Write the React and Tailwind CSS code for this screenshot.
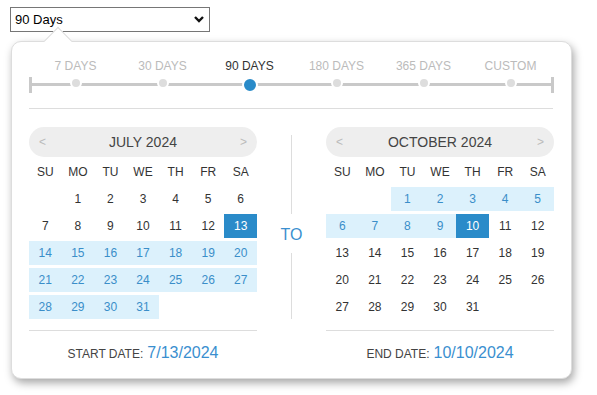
import React from "react";

const FONT = { fontFamily: "'Liberation Sans', Arial, Helvetica, sans-serif" };

const OPTIONS = ["7 DAYS", "30 DAYS", "90 DAYS", "180 DAYS", "365 DAYS", "CUSTOM"];
const DAYNAMES = ["SU", "MO", "TU", "WE", "TH", "FR", "SA"];

function Calendar({ title, startDay, days, selected, rangeFrom, rangeTo, label, value }) {
  const cells = [];
  for (let i = 0; i < startDay; i++) cells.push(null);
  for (let d = 1; d <= days; d++) cells.push(d);
  return (
    <div className="w-[228px] flex flex-col">
      <div className="h-[30px] rounded-full bg-[#eeeeee] flex items-center justify-between px-[10px]">
        <span className="text-[12px] text-[#bbbbbb]">&lt;</span>
        <span className="text-[14px] text-[#444444]">{title}</span>
        <span className="text-[12px] text-[#bbbbbb]">&gt;</span>
      </div>
      <div className="grid grid-cols-7 h-[24px] mt-[3px]">
        {DAYNAMES.map((n) => (
          <div key={n} className="flex items-center justify-center text-[12px] text-[#333333]">
            {n}
          </div>
        ))}
      </div>
      <div className="grid grid-cols-7 gap-y-[3px] mt-[3px]">
        {cells.map((d, i) => {
          let cls = "text-[#333333]";
          if (d === selected) cls = "bg-[#2a8bc9] text-white";
          else if (d !== null && d >= rangeFrom && d <= rangeTo) cls = "bg-[#dcf1fc] text-[#3a8ec9]";
          return (
            <div key={i} className={`h-[24px] flex items-center justify-center text-[12px] ${cls}`}>
              {d}
            </div>
          );
        })}
      </div>
      <div className="border-t border-[#dddddd] mt-[11px]" />
      <div className="flex items-baseline justify-center pt-[13px] leading-[18px]">
        <span className="text-[12px] text-[#444444]">{label}</span>
        <span className="text-[16px] text-[#3a8fcf] ml-[4px]">{value}</span>
      </div>
    </div>
  );
}

export default function App() {
  return (
    <div className="bg-white w-[597px] h-[395px] pt-[7px] pl-[10px]" style={FONT}>
      <div className="w-[200px] h-[25px] border border-[#767676] flex items-center justify-between pl-[4px] pr-[5px] text-[13px] text-black">
        <span>90 Days</span>
        <svg width="10" height="7" viewBox="0 0 10 7">
          <path d="M1 1 L5 5 L9 1" fill="none" stroke="#111" strokeWidth="2.4" />
        </svg>
      </div>
      <div className="relative ml-[1px] mt-[9px] w-[561px] h-[338px] bg-white border border-[#dddddd] rounded-[10px] shadow-[2px_4px_8px_rgba(0,0,0,0.35)] px-[17px] pt-[17px]">
        <div className="absolute left-[36px] top-[-11px] w-[20px] h-[20px] bg-white border-t border-l border-[#dddddd] rotate-45" />
        <div className="relative">
          <div className="grid grid-cols-6 pl-[3px]">
            {OPTIONS.map((o) => (
              <div
                key={o}
                className={`text-center text-[12px] leading-[14px] ${o === "90 DAYS" ? "text-[#333333]" : "text-[#bbbbbb]"}`}
              >
                {o}
              </div>
            ))}
          </div>
          <div className="relative h-[16px] mt-[4px] flex items-center">
            <div className="absolute left-0 right-0 top-[6px] h-[3px] bg-[#c9c9c9]" />
            <div className="absolute left-0 top-0 w-[3px] h-[16px] bg-[#c9c9c9]" />
            <div className="absolute right-0 top-0 w-[3px] h-[16px] bg-[#c9c9c9]" />
            <div className="relative grid grid-cols-6 pl-[3px] w-full">
              {OPTIONS.map((o) => (
                <div key={o} className="flex justify-center">
                  {o === "90 DAYS" ? (
                    <div className="w-[16px] h-[16px] rounded-full bg-[#2a8bc9] border-2 border-white" />
                  ) : (
                    <div className="w-[12px] h-[12px] rounded-full bg-[#dddddd] border-2 border-white" />
                  )}
                </div>
              ))}
            </div>
          </div>
        </div>
        <div className="border-t border-[#dddddd] mt-[15px] mr-[1px]" />
        <div className="flex mt-[18px]">
          <Calendar
            title="JULY 2024"
            startDay={1}
            days={31}
            selected={13}
            rangeFrom={14}
            rangeTo={31}
            label="START DATE:"
            value="7/13/2024"
          />
          <div className="flex-1 flex flex-col items-center pt-[8px]">
            <div className="w-px h-[79px] bg-[#dddddd]" />
            <div className="mt-[12px] text-[16px] leading-[18px] text-[#3a8fcf]">TO</div>
            <div className="mt-[9px] w-px h-[66px] bg-[#dddddd]" />
          </div>
          <Calendar
            title="OCTOBER 2024"
            startDay={2}
            days={31}
            selected={10}
            rangeFrom={1}
            rangeTo={9}
            label="END DATE:"
            value="10/10/2024"
          />
        </div>
      </div>
    </div>
  );
}
